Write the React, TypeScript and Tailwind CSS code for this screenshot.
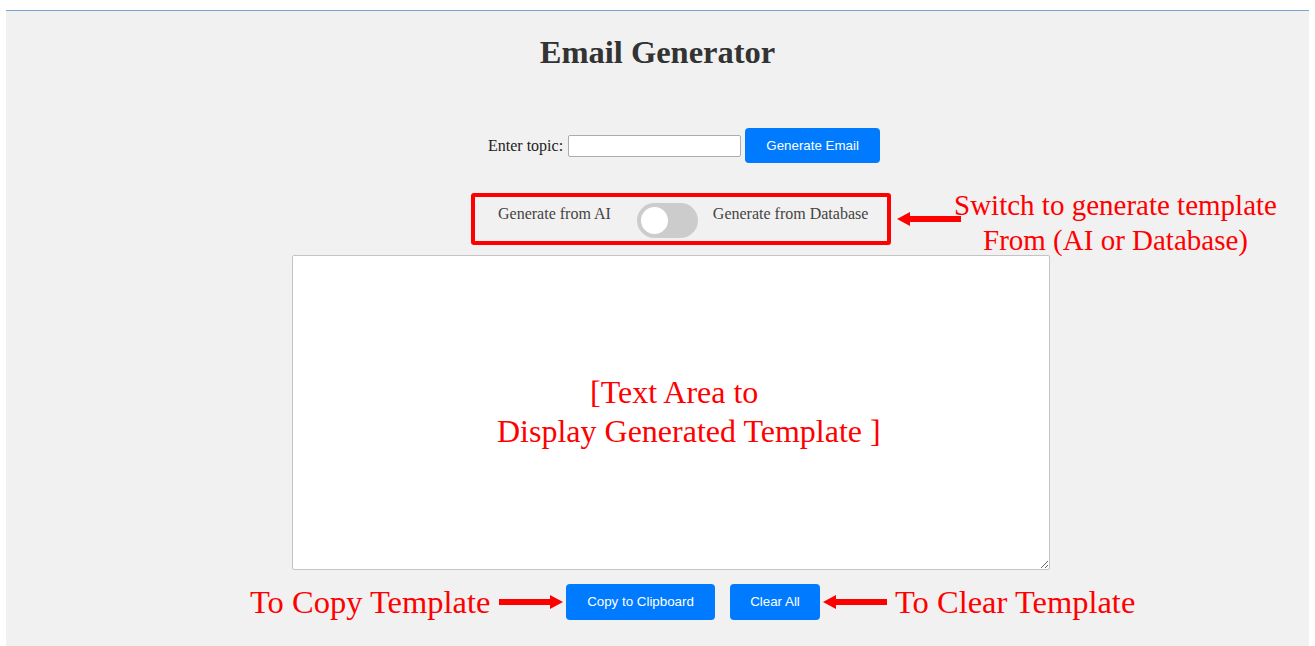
import { useState } from 'react';

function ArrowRight() {
  return (
    <svg width="64" height="14" viewBox="0 0 64 14" className="shrink-0">
      <rect x="0" y="4" width="53" height="6" fill="#ff0000" />
      <polygon points="51,0 64,7 51,14" fill="#ff0000" />
    </svg>
  );
}

function ArrowLeft() {
  return (
    <svg width="64" height="14" viewBox="0 0 64 14" className="shrink-0">
      <rect x="11" y="4" width="53" height="6" fill="#ff0000" />
      <polygon points="13,0 0,7 13,14" fill="#ff0000" />
    </svg>
  );
}

export default function App() {
  const [topic, setTopic] = useState('');
  const [fromDb, setFromDb] = useState(false);
  const [template, setTemplate] = useState('');

  return (
    <div className="min-h-[646px] bg-white pt-[10px] font-['Liberation_Serif',serif]">
      <div className="ml-[6px] h-[636px] w-[1303px] border-t border-[#7ba3d4] bg-[#f1f1f1]">
        <h1 className="mt-[22px] text-center text-[32.5px] leading-[38px] font-bold text-[#333]">
          Email Generator
        </h1>

        {/* topic input */}
        <div className="mt-[57px] ml-[482px] flex h-[35px] items-center">
          <label className="text-[16px] text-[#222]">Enter topic:</label>
          <input
            type="text"
            value={topic}
            onChange={(e) => setTopic(e.target.value)}
            className="ml-[5px] h-[22px] w-[173px] rounded-[2px] border border-[#acacac] bg-white px-1 text-[13px] outline-none"
          />
          <button
            onClick={() => setTemplate(topic ? `Subject: ${topic}` : '')}
            className="ml-[4px] h-[35px] w-[135px] rounded-[4px] bg-[#007bff] font-['Liberation_Sans',Arial,sans-serif] text-[13.33px] text-white"
          >
            Generate Email
          </button>
        </div>

        {/* source switch */}
        <div className="relative mt-[30px] ml-[465px] flex items-center">
          <div className="flex h-[52px] w-[420px] items-start rounded-[3px] border-4 border-[#ff0000] pt-[2px] pl-[23px]">
            <span className="mt-[6px] text-[16px] leading-[18px] text-[#444]">Generate from AI</span>
            <button
              onClick={() => setFromDb(!fromDb)}
              className={`ml-[26px] mt-[4px] flex h-[35px] w-[61px] shrink-0 items-center rounded-full px-[4px] ${fromDb ? 'justify-end bg-[#007bff]' : 'justify-start bg-[#cccccc]'}`}
            >
              <span className="block h-[27px] w-[27px] rounded-full bg-white" />
            </button>
            <span className="ml-[15px] mt-[6px] text-[16px] leading-[18px] whitespace-nowrap text-[#444]">
              Generate from Database
            </span>
          </div>
          <div className="ml-[6px]">
            <ArrowLeft />
          </div>
          <div className="absolute top-[-5px] left-[482px] w-[325px] text-center text-[29px] leading-[35px] whitespace-nowrap text-[#ff0000]">
            Switch to generate template
            <br />
            From (AI or Database)
          </div>
        </div>

        {/* template output */}
        <div className="relative mt-[10px] ml-[286px] h-[315px] w-[758px]">
          <textarea
            value={template}
            onChange={(e) => setTemplate(e.target.value)}
            className="block h-[315px] w-[758px] rounded-[2px] border border-[#c4c4c4] bg-white p-1 text-[14px] outline-none"
          />
          {!template && (
            <div className="pointer-events-none absolute top-[118px] left-[205px] text-[32px] leading-[39px] whitespace-nowrap text-[#ff0000]">
              <div className="pl-[93px]">[Text Area to</div>
              <div>Display Generated Template ]</div>
            </div>
          )}
        </div>

        {/* actions */}
        <div className="mt-[14px] ml-[244px] flex h-[36px] items-center">
          <span className="w-[240px] text-[32.5px] leading-[36px] whitespace-nowrap text-[#ff0000]">To Copy Template</span>
          <div className="ml-[9px]">
            <ArrowRight />
          </div>
          <button
            onClick={() => navigator.clipboard?.writeText(template)}
            className="ml-[3px] h-[36px] w-[149px] rounded-[4px] bg-[#007bff] font-['Liberation_Sans',Arial,sans-serif] text-[13.33px] text-white"
          >
            Copy to Clipboard
          </button>
          <button
            onClick={() => {
              setTopic('');
              setTemplate('');
            }}
            className="ml-[15px] h-[36px] w-[90px] rounded-[4px] bg-[#007bff] font-['Liberation_Sans',Arial,sans-serif] text-[13.33px] text-white"
          >
            Clear All
          </button>
          <div className="ml-[3px]">
            <ArrowLeft />
          </div>
          <span className="ml-[8px] text-[32.5px] leading-[36px] whitespace-nowrap text-[#ff0000]">To Clear Template</span>
        </div>
      </div>
    </div>
  );
}
